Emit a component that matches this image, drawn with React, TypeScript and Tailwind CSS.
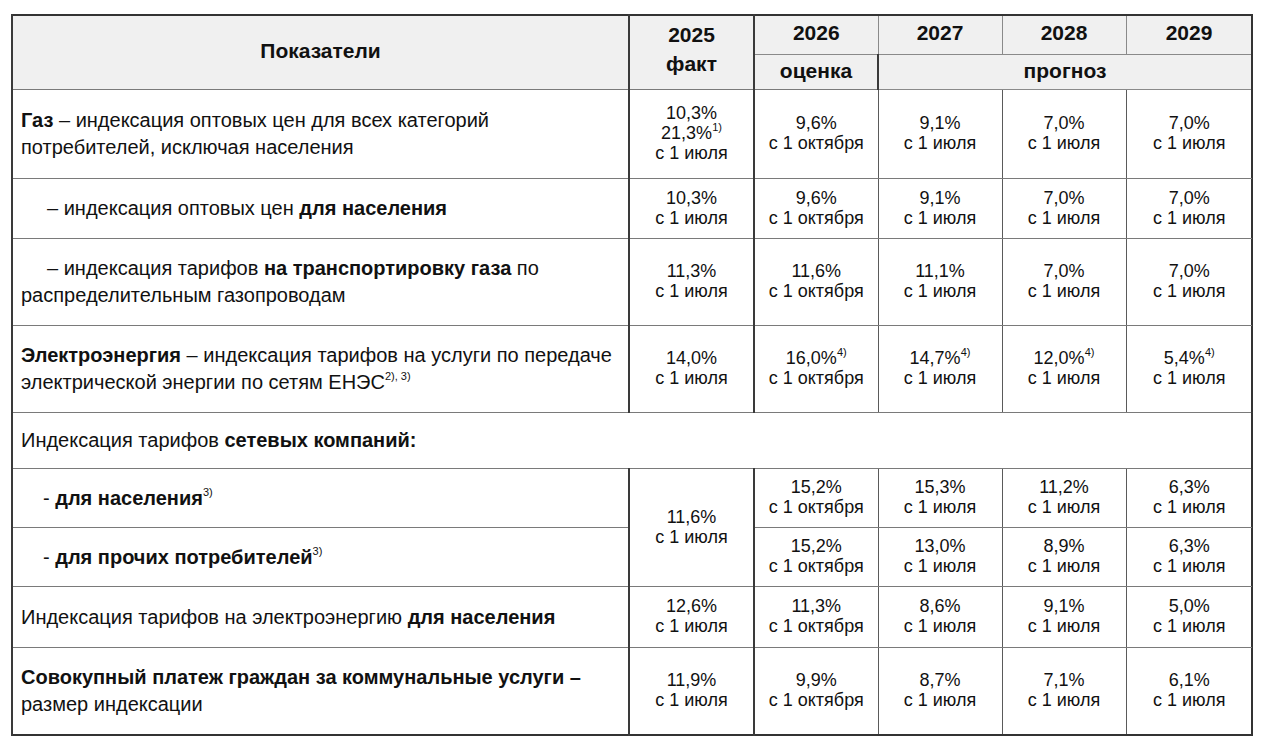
import React from "react";

const Sup = ({ children }: { children: React.ReactNode }) => (
  <sup className="text-[11px] relative -top-[1px] align-super leading-none">{children}</sup>
);

const V = ({ v, d, s }: { v: string; d: string; s?: string }) => (
  <div className="leading-[20px]">
    <div>
      {v}
      {s ? <Sup>{s}</Sup> : null}
    </div>
    <div>{d}</div>
  </div>
);

const tdL = "border-y border-y-[#7a7a7a] border-x-2 border-x-[#3a3a3a] text-left align-middle pl-[8px] pr-2 text-[20px] leading-[27px]";
const tdD = "border-y border-y-[#7a7a7a] border-l border-l-[#5a5a5a] text-center align-middle text-[18px] pb-[2px]";
const tdF = "border-y border-y-[#7a7a7a] border-x-2 border-x-[#3a3a3a] text-center align-middle text-[18px] pb-[2px]";

const J = "с 1 июля";
const O = "с 1 октября";

export default function App() {
  return (
    <div className="w-[1280px] h-[752px] bg-white text-[#111]" style={{ fontFamily: '"Liberation Sans", Arial, sans-serif' }}>
      <div className="pt-[14px] pl-[11px]">
        <table className="table-fixed border-collapse w-[1240px] border-2 border-[#333]">
          <colgroup>
            <col className="w-[617px]" />
            <col className="w-[125px]" />
            <col className="w-[124px]" />
            <col className="w-[124px]" />
            <col className="w-[124px]" />
            <col className="w-[126px]" />
          </colgroup>
          <thead>
            <tr className="h-[39px] bg-[#f0f0f0]">
              <th rowSpan={2} className="border-x-2 border-x-[#3a3a3a] border-b border-b-[#7a7a7a] text-[21px] font-bold text-center align-middle pb-[4px]">
                Показатели
              </th>
              <th rowSpan={2} className="border-x-2 border-x-[#3a3a3a] border-b border-b-[#7a7a7a] text-[21px] font-bold text-center align-middle leading-[29px] pb-[8px]">
                2025
                <br />
                факт
              </th>
              <th className="border border-[#8a8a8a] text-[21px] font-bold text-center pb-[4px]">2026</th>
              <th className="border border-[#8a8a8a] text-[21px] font-bold text-center pb-[4px]">2027</th>
              <th className="border border-[#8a8a8a] text-[21px] font-bold text-center pb-[4px]">2028</th>
              <th className="border border-[#8a8a8a] text-[21px] font-bold text-center pb-[4px]">2029</th>
            </tr>
            <tr className="h-[35px] bg-[#f0f0f0]">
              <th className="border border-[#8a8a8a] border-b-[#7a7a7a] text-[21px] font-bold text-center pb-[3px]">оценка</th>
              <th colSpan={4} className="border border-[#8a8a8a] border-l-2 border-l-[#3a3a3a] text-[21px] font-bold text-center pb-[3px]">прогноз</th>
            </tr>
          </thead>
          <tbody>
            <tr className="h-[89px]">
              <td className={tdL}>
                <b>Газ</b> – индексация оптовых цен для всех категорий
                <br />
                потребителей, исключая населения
              </td>
              <td className={tdF}>
                <div className="leading-[20px]">
                  <div>10,3%</div>
                  <div>
                    21,3%<Sup>1)</Sup>
                  </div>
                  <div>{J}</div>
                </div>
              </td>
              <td className={tdD}><V v="9,6%" d={O} /></td>
              <td className={tdD}><V v="9,1%" d={J} /></td>
              <td className={tdD}><V v="7,0%" d={J} /></td>
              <td className={tdD}><V v="7,0%" d={J} /></td>
            </tr>
            <tr className="h-[60px]">
              <td className={tdL}>
                <span className="pl-[26px]">– индексация оптовых цен </span>
                <b>для населения</b>
              </td>
              <td className={tdF}><V v="10,3%" d={J} /></td>
              <td className={tdD}><V v="9,6%" d={O} /></td>
              <td className={tdD}><V v="9,1%" d={J} /></td>
              <td className={tdD}><V v="7,0%" d={J} /></td>
              <td className={tdD}><V v="7,0%" d={J} /></td>
            </tr>
            <tr className="h-[87px]">
              <td className={tdL}>
                <span className="pl-[26px]">– индексация тарифов </span>
                <b>на транспортировку газа</b> по
                <br />
                распределительным газопроводам
              </td>
              <td className={tdF}><V v="11,3%" d={J} /></td>
              <td className={tdD}><V v="11,6%" d={O} /></td>
              <td className={tdD}><V v="11,1%" d={J} /></td>
              <td className={tdD}><V v="7,0%" d={J} /></td>
              <td className={tdD}><V v="7,0%" d={J} /></td>
            </tr>
            <tr className="h-[87px]">
              <td className={tdL}>
                <b>Электроэнергия</b> – индексация тарифов на услуги по передаче
                <br />
                электрической энергии по сетям ЕНЭС<Sup>2), 3)</Sup>
              </td>
              <td className={tdF}><V v="14,0%" d={J} /></td>
              <td className={tdD}><V v="16,0%" d={O} s="4)" /></td>
              <td className={tdD}><V v="14,7%" d={J} s="4)" /></td>
              <td className={tdD}><V v="12,0%" d={J} s="4)" /></td>
              <td className={tdD}><V v="5,4%" d={J} s="4)" /></td>
            </tr>
            <tr className="h-[56px]">
              <td colSpan={6} className={tdL}>
                Индексация тарифов <b>сетевых компаний:</b>
              </td>
            </tr>
            <tr className="h-[59px]">
              <td className={tdL}>
                <span className="pl-[22px]">- </span>
                <b>для населения</b>
                <Sup>3)</Sup>
              </td>
              <td rowSpan={2} className={tdF}><V v="11,6%" d={J} /></td>
              <td className={tdD}><V v="15,2%" d={O} /></td>
              <td className={tdD}><V v="15,3%" d={J} /></td>
              <td className={tdD}><V v="11,2%" d={J} /></td>
              <td className={tdD}><V v="6,3%" d={J} /></td>
            </tr>
            <tr className="h-[59px]">
              <td className={tdL}>
                <span className="pl-[22px]">- </span>
                <b>для прочих потребителей</b>
                <Sup>3)</Sup>
              </td>
              <td className={tdD}><V v="15,2%" d={O} /></td>
              <td className={tdD}><V v="13,0%" d={J} /></td>
              <td className={tdD}><V v="8,9%" d={J} /></td>
              <td className={tdD}><V v="6,3%" d={J} /></td>
            </tr>
            <tr className="h-[61px]">
              <td className={tdL}>
                Индексация тарифов на электроэнергию <b>для населения</b>
              </td>
              <td className={tdF}><V v="12,6%" d={J} /></td>
              <td className={tdD}><V v="11,3%" d={O} /></td>
              <td className={tdD}><V v="8,6%" d={J} /></td>
              <td className={tdD}><V v="9,1%" d={J} /></td>
              <td className={tdD}><V v="5,0%" d={J} /></td>
            </tr>
            <tr className="h-[87px]">
              <td className={tdL}>
                <b>Совокупный платеж граждан за коммунальные услуги –</b>
                <br />
                размер индексации
              </td>
              <td className={tdF}><V v="11,9%" d={J} /></td>
              <td className={tdD}><V v="9,9%" d={O} /></td>
              <td className={tdD}><V v="8,7%" d={J} /></td>
              <td className={tdD}><V v="7,1%" d={J} /></td>
              <td className={tdD}><V v="6,1%" d={J} /></td>
            </tr>
          </tbody>
        </table>
      </div>
    </div>
  );
}
